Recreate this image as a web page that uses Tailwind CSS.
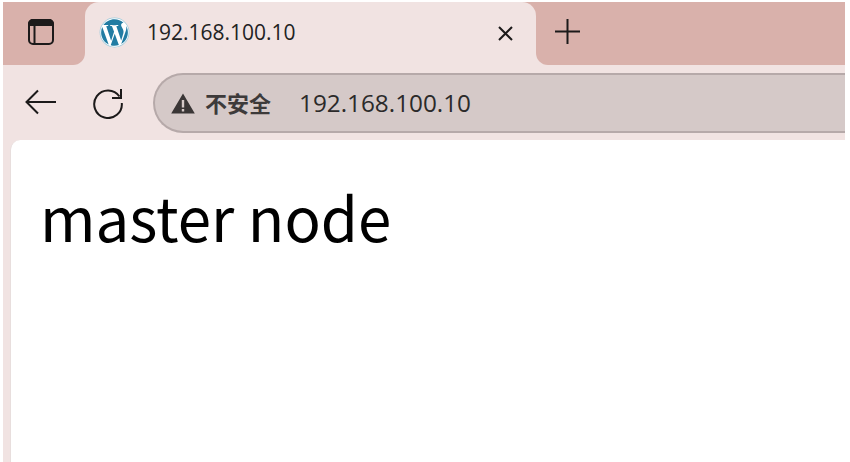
<!DOCTYPE html>
<html lang="en">
<head>
  <meta charset="UTF-8" />
  <title>192.168.100.10</title>
  <script src="https://cdn.jsdelivr.net/npm/@tailwindcss/browser@4"></script>
</head>
<body class="h-screen overflow-hidden bg-white pl-[3px] pt-[2px] pr-[5px] font-['Open_Sans','Noto_Sans_CJK_SC',sans-serif] text-[#222]">
  <div class="flex h-full flex-col bg-[#f1e3e2]">

    <!-- Tab strip -->
    <div class="flex h-[63px] shrink-0 bg-[linear-gradient(#d9b1ab_50%,#f1e3e2_50%)]">
      <div class="flex w-[82px] shrink-0 items-start rounded-br-[12px] bg-[#d9b1ab] pl-[24px] pt-[16px]">
        <svg width="28" height="28" viewBox="0 0 28 28" fill="none" stroke="#1c1a1a" stroke-width="2">
          <rect x="2" y="2" width="24" height="24" rx="4" />
          <path d="M2 7V6a4 4 0 0 1 4-4h16a4 4 0 0 1 4 4v1z" fill="#1c1a1a" />
          <path d="M7.500 8v17" />
        </svg>
      </div>
      <div class="flex w-[451px] shrink-0 items-start rounded-t-[14px] bg-[#f1e3e2] pl-[14px] pt-[14px]">
        <svg class="mt-[1px]" width="31" height="31" viewBox="-0.500 -0.500 25 25">
          <circle cx="12" cy="12" r="12" fill="#9fcbdc" />
          <circle cx="12" cy="12" r="11.400" fill="#fff" />
          <path fill="#217ca3" d="M21.469 6.825c.84 1.537 1.318 3.3 1.318 5.175 0 3.979-2.156 7.456-5.363 9.325l3.295-9.527c.615-1.54.82-2.771.82-3.864 0-.405-.026-.78-.07-1.11m-7.981.105c.647-.03 1.232-.105 1.232-.105.582-.075.514-.93-.067-.899 0 0-1.755.135-2.88.135-1.064 0-2.85-.15-2.85-.15-.585-.03-.661.855-.075.885 0 0 .54.061 1.125.09l1.68 4.605-2.37 7.08L5.354 6.9c.649-.03 1.234-.1 1.234-.1.585-.075.516-.93-.065-.896 0 0-1.746.138-2.874.138-.2 0-.438-.008-.69-.015C4.911 3.15 8.235 1.215 12 1.215c2.809 0 5.365 1.072 7.286 2.833-.046-.003-.091-.009-.141-.009-1.06 0-1.812.923-1.812 1.914 0 .89.513 1.643 1.06 2.531.411.72.89 1.643.89 2.977 0 .915-.354 1.994-.821 3.479l-1.075 3.585-3.9-11.61.001.014zM12 22.784c-1.059 0-2.081-.153-3.048-.437l3.237-9.406 3.315 9.087c.024.053.05.101.078.149-1.12.393-2.325.609-3.582.609M1.211 12c0-1.564.336-3.05.935-4.390L7.290 21.709C3.694 19.960 1.212 16.271 1.211 12" />
        </svg>
        <span class="ml-[17px] mt-[1px] text-[21px] leading-[30px]">192.168.100.10</span>
        <svg class="ml-auto mr-[22px] mt-[9px]" width="17" height="17" viewBox="0 0 17 17" stroke="#1c1a1a" stroke-width="2">
          <path d="M2 2l13 13M15 2L2 15" />
        </svg>
      </div>
      <div class="flex-1 rounded-bl-[12px] bg-[#d9b1ab] pl-[18px] pt-[16px]">
        <svg width="27" height="27" viewBox="0 0 27 27" stroke="#1c1a1a" stroke-width="2">
          <path d="M13.500 1v25M1 13.500h25" />
        </svg>
      </div>
    </div>

    <!-- Toolbar -->
    <div class="flex h-[75px] shrink-0 items-start pl-[21px]">
      <svg class="mt-[23px]" width="33" height="28" viewBox="0 0 33 28" fill="none" stroke="#1c1a1a" stroke-width="2">
        <path d="M32 14H3M14 2.500L2.500 14 14 25.500" />
      </svg>
      <svg class="ml-[35px] mt-[22px]" width="32" height="32" viewBox="0 0 32 32" fill="none" stroke="#1c1a1a" stroke-width="2">
        <path d="M27.500 9.500A13.800 13.800 0 1 0 29.800 16" />
        <path d="M29 2v9h-9" />
      </svg>
      <div class="ml-[29px] mt-[8px] flex h-[60px] flex-1 items-center rounded-l-[30px] border-y-2 border-l-2 border-[#b6a9a9] bg-[#d5c9c8] pl-[16px]">
        <svg width="24" height="21" viewBox="0 0 24 21">
          <path fill="#3a3636" fill-rule="evenodd" d="M12 0.500L23.800 20.500H0.200zM10.800 7v7.500h2.400V7zM10.800 16v2.400h2.400V16z" />
        </svg>
        <span class="ml-[10px] text-[22px] font-bold text-[#3d3a3a]">不安全</span>
        <span class="ml-[28px] text-[24.300px] text-[#2b2a2a]">192.168.100.10</span>
      </div>
    </div>

    <!-- Page -->
    <div class="ml-[7px] flex-1 rounded-tl-[10px] border-l border-[#e8dedd] bg-white pl-[29px] pt-[36px]">
      <h1 class="font-['Noto_Sans_CJK_SC',sans-serif] text-[60px] leading-[80px] text-black">master node</h1>
    </div>
  </div>
</body>
</html>
